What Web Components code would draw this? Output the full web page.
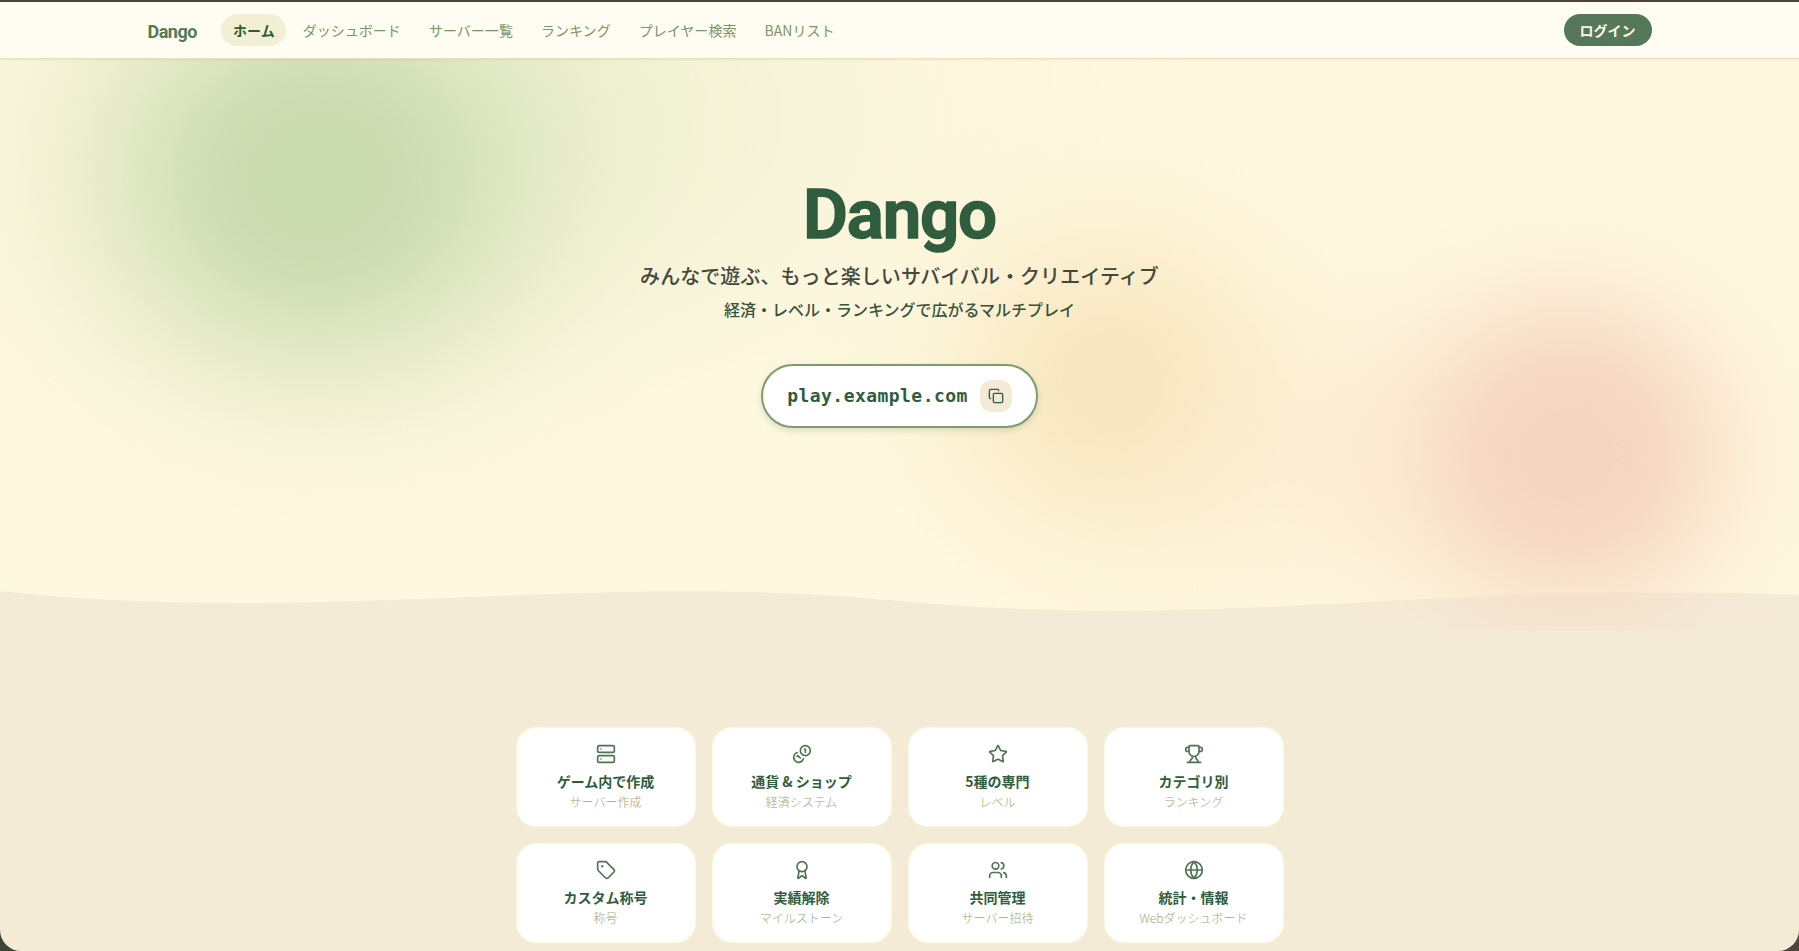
<!DOCTYPE html>
<html lang="ja">
<head>
<meta charset="utf-8">
<title>Dango</title>
<style>
  html {
    background: linear-gradient(90deg, #3b4636, #4c443d);
  }

  body {
    margin: 0;
    height: 951px;
    overflow: hidden;
    font-family: "Noto Sans CJK JP", sans-serif;
    -webkit-font-smoothing: antialiased;
  }
</style>
</head>
<body>
<dango-app>
  <dango-nav slot="nav">
    <dango-nav-item active>ホーム</dango-nav-item>
    <dango-nav-item>ダッシュボード</dango-nav-item>
    <dango-nav-item>サーバー一覧</dango-nav-item>
    <dango-nav-item>ランキング</dango-nav-item>
    <dango-nav-item>プレイヤー検索</dango-nav-item>
    <dango-nav-item>BANリスト</dango-nav-item>
    <dango-login slot="action">ログイン</dango-login>
  </dango-nav>
  <dango-hero>
    <span slot="title">Dango</span>
    <span slot="lead">みんなで遊ぶ、もっと楽しいサバイバル・クリエイティブ</span>
    <span slot="sub">経済・レベル・ランキングで広がるマルチプレイ</span>
    <dango-address>play.example.com</dango-address>
  </dango-hero>
  <dango-features>
    <dango-card icon="server" label="サーバー作成">ゲーム内で作成</dango-card>
    <dango-card icon="coins" label="経済システム">通貨 &amp; ショップ</dango-card>
    <dango-card icon="star" label="レベル">5種の専門</dango-card>
    <dango-card icon="trophy" label="ランキング">カテゴリ別</dango-card>
    <dango-card icon="tag" label="称号">カスタム称号</dango-card>
    <dango-card icon="award" label="マイルストーン">実績解除</dango-card>
    <dango-card icon="users" label="サーバー招待">共同管理</dango-card>
    <dango-card icon="globe" label="Webダッシュボード">統計・情報</dango-card>
  </dango-features>
</dango-app>

<script>
const ICONS = {
  server: '<rect width="20" height="8" x="2" y="2" rx="2"/><rect width="20" height="8" x="2" y="14" rx="2"/><path d="M6 6h.01M6 18h.01"/>',
  coins: '<path d="M13.744 17.736a6 6 0 1 1-7.48-7.48"/><path d="M15 6h1v4"/><path d="m6.134 14.768.866-.868 2.868 2.868"/><circle cx="16" cy="8" r="6"/>',
  star: '<path d="M11.525 2.295a.53.53 0 0 1 .95 0l2.31 4.679a2.123 2.123 0 0 0 1.595 1.16l5.166.756a.53.53 0 0 1 .294.904l-3.736 3.638a2.123 2.123 0 0 0-.611 1.878l.882 5.14a.53.53 0 0 1-.771.56l-4.618-2.428a2.122 2.122 0 0 0-1.973 0L6.396 21.01a.53.53 0 0 1-.77-.56l.881-5.139a2.122 2.122 0 0 0-.611-1.879L2.16 9.795a.53.53 0 0 1 .294-.906l5.165-.755a2.122 2.122 0 0 0 1.597-1.16z"/>',
  trophy: '<path d="M10 14.66v1.626a2 2 0 0 1-.976 1.696A5 5 0 0 0 7 21.978"/><path d="M14 14.66v1.626a2 2 0 0 0 .976 1.696A5 5 0 0 1 17 21.978"/><path d="M18 9h1.5a1 1 0 0 0 0-5H18"/><path d="M4 22h16"/><path d="M6 9a6 6 0 0 0 12 0V3a1 1 0 0 0-1-1H7a1 1 0 0 0-1 1z"/><path d="M6 9H4.5a1 1 0 0 1 0-5H6"/>',
  tag: '<path d="M12.586 2.586A2 2 0 0 0 11.172 2H4a2 2 0 0 0-2 2v7.172a2 2 0 0 0 .586 1.414l8.704 8.704a2.426 2.426 0 0 0 3.42 0l6.58-6.58a2.426 2.426 0 0 0 0-3.42z"/><circle cx="7.5" cy="7.5" r=".5" fill="currentColor"/>',
  award: '<path d="m15.477 12.89 1.515 8.526a.5.5 0 0 1-.81.47l-3.58-2.687a1 1 0 0 0-1.197 0l-3.586 2.686a.5.5 0 0 1-.81-.469l1.514-8.526"/><circle cx="12" cy="8" r="6"/>',
  users: '<path d="M16 21v-2a4 4 0 0 0-4-4H6a4 4 0 0 0-4 4v2"/><path d="M16 3.128a4 4 0 0 1 0 7.744"/><path d="M22 21v-2a4 4 0 0 0-3-3.87"/><circle cx="9" cy="7" r="4"/>',
  globe: '<circle cx="12" cy="12" r="10"/><path d="M12 2a14.5 14.5 0 0 0 0 20 14.5 14.5 0 0 0 0-20"/><path d="M2 12h20"/>',
  copy: '<rect width="14" height="14" x="8" y="8" rx="2"/><path d="M4 16c-1.1 0-2-.9-2-2V4c0-1.1.9-2 2-2h10c1.1 0 2 .9 2 2"/>',
};

function icon(name, size) {
  return `<svg width="${size}" height="${size}" viewBox="0 0 24 24" fill="none" stroke="currentColor" stroke-width="2" stroke-linecap="round" stroke-linejoin="round">${ICONS[name]}</svg>`;
}

// Radial gradient that falls off like a blurred disc.
function glow(id, color, strength, core) {
  let stops = '';
  for (let i = 0; i <= 20; i++) {
    const t = i / 20;
    const d = Math.max(0, (t - core) / (1 - core));
    const alpha = strength * Math.exp(-d * d * 4.3) * (1 - d ** 6);
    stops += `<stop offset="${t}" stop-color="${color}" stop-opacity="${alpha.toFixed(3)}"/>`;
  }
  return `<radialGradient id="${id}">${stops}</radialGradient>`;
}

// Registers an element whose shadow root is filled by render(element).
function define(name, render) {
  customElements.define(name, class extends HTMLElement {
    constructor() {
      super();
      this.attachShadow({ mode: 'open' });
    }

    connectedCallback() {
      this.shadowRoot.innerHTML = render(this);
    }
  });
}

define('dango-app', () => `
  <style>
    :host {
      display: flex;
      flex-direction: column;
      box-sizing: border-box;
      height: 951px;
      border-top: 2px solid #4c413b;
      border-radius: 0 0 21px 21px;
      overflow: hidden;
      background: #f4ebd7;
    }
  </style>
  <slot name="nav"></slot>
  <slot></slot>
`);

define('dango-nav', () => `
  <style>
    :host {
      display: block;
      position: relative;
      flex: none;
      box-sizing: border-box;
      height: 57px;
      background: #fffdf1;
      border-bottom: 1px solid #e6dfbf;
      box-shadow: 0 1px 2px rgba(160, 150, 100, .15);
      z-index: 1;
    }
    .inner {
      display: flex;
      align-items: center;
      box-sizing: border-box;
      max-width: 1536px;
      height: 56px;
      margin: 0 auto;
      padding: 0 16px;
    }
    .brand {
      width: 49px;
      margin-right: 24px;
      color: #56785a;
      font: 700 18px/28px Roboto, sans-serif;
      letter-spacing: -.5px;
      white-space: nowrap;
      padding-top: 3px;
    }
    nav {
      display: flex;
      gap: 4px;
      flex: 1;
    }
  </style>
  <div class="inner">
    <div class="brand">Dango</div>
    <nav><slot></slot></nav>
    <slot name="action"></slot>
  </div>
`);

define('dango-nav-item', () => `
  <style>
    :host {
      display: block;
      padding: 6px 11.5px 6px 12.5px;
      border-radius: 16px;
      color: #7b9569;
      font-size: 14px;
      font-weight: 400;
      line-height: 20px;
      letter-spacing: .03px;
      white-space: nowrap;
    }
    :host([active]) {
      background: #f1f0d4;
      color: #2f5b3b;
      font-weight: 700;
    }
  </style>
  <slot></slot>
`);

define('dango-login', () => `
  <style>
    :host {
      display: block;
      padding: 6px 16px;
      border-radius: 16px;
      background: #56785a;
      color: #fff8e1;
      font-size: 14px;
      font-weight: 700;
      line-height: 20px;
    }
  </style>
  <slot></slot>
`);

define('dango-hero', () => `
  <style>
    :host {
      display: block;
      position: relative;
      flex: none;
      height: 572px;
      overflow: hidden;
      background: #fff8e0;
      text-align: center;
    }
    .backdrop {
      position: absolute;
      inset: 0;
      width: 100%;
      height: 100%;
    }
    .content {
      position: relative;
      display: flex;
      flex-direction: column;
      align-items: center;
      padding-top: 120px;
    }
    h1 {
      margin: 0;
      padding-left: 0;
      color: #2f5d3d;
      font: 600 69px/72px Roboto, sans-serif;
      letter-spacing: -1.2px;
      -webkit-text-stroke: 1.6px #2f5d3d;
      stroke-linejoin: round;
    }
    p {
      margin: 0;
      font-weight: 500;
    }
    .lead {
      margin-top: 11px;
      color: #42493c;
      font-size: 20px;
      line-height: 28px;
      letter-spacing: .06px;
    }
    .sub {
      margin-top: 7px;
      color: #36543c;
      font-size: 16px;
      line-height: 24px;
    }
    .address {
      margin-top: 43px;
    }
  </style>
  <svg class="backdrop" viewBox="0 0 1799 572" preserveAspectRatio="none">
    <defs>
      ${glow('green', '#c6d8ab', .9, .1)}
      ${glow('mist', '#dfe9c4', .55, 0)}
      ${glow('amber', '#f6e4b8', .8, .08)}
      ${glow('pink', '#f5d3bf', .95, .14)}
      ${glow('halo', '#f9e3c8', .5, 0)}
    </defs>
    <ellipse cx="460" cy="60" rx="800" ry="460" fill="url(#mist)"/>
    <ellipse cx="315" cy="122" rx="400" ry="370" fill="url(#green)"/>
    <ellipse cx="1112" cy="323" rx="310" ry="300" fill="url(#amber)"/>
    <ellipse cx="1430" cy="400" rx="560" ry="300" fill="url(#halo)"/>
    <path d="M0 532C80 541 160 544 240 544C400 544 530 532.5 690 532.5C890 532.5 910 551.5 1115 551.5C1310 551.5 1430 533.5 1680 533.5Q1740 533.5 1799 536V572H0Z" fill="#f4ebd7"/>
    <ellipse cx="1571" cy="394" rx="280" ry="285" fill="url(#pink)"/>
  </svg>
  <div class="content">
    <h1><slot name="title"></slot></h1>
    <p class="lead"><slot name="lead"></slot></p>
    <p class="sub"><slot name="sub"></slot></p>
    <div class="address"><slot></slot></div>
  </div>
`);

define('dango-address', () => `
  <style>
    :host {
      display: flex;
      align-items: center;
      gap: 12px;
      box-sizing: border-box;
      height: 64px;
      padding: 0 24px;
      border: 2px solid #7f9c6f;
      border-radius: 32px;
      background: #fff;
      box-shadow: 0 3px 6px rgba(86, 120, 90, .2);
      color: #2f5d3d;
    }
    code {
      font: 700 18px/28px "DejaVu Sans Mono", monospace;
      letter-spacing: .45px;
    }
    button {
      display: flex;
      align-items: center;
      justify-content: center;
      width: 32px;
      height: 32px;
      padding: 0;
      border: 0;
      border-radius: 12px;
      background: #f4ebd7;
      color: #2f5d3d;
    }
  </style>
  <code><slot></slot></code>
  <button aria-label="コピー">${icon('copy', 16)}</button>
`);

define('dango-features', () => `
  <style>
    :host {
      display: grid;
      grid-template-columns: repeat(4, 180px);
      gap: 16px;
      justify-content: center;
      padding-top: 96px;
    }
  </style>
  <slot></slot>
`);

define('dango-card', (el) => `
  <style>
    :host {
      display: flex;
      flex-direction: column;
      align-items: center;
      box-sizing: border-box;
      height: 100px;
      padding-top: 16px;
      border: 1px solid #faf8e4;
      border-radius: 20px;
      background: #fff;
      box-shadow: 0 0 3px rgba(245, 243, 200, .9);
      white-space: nowrap;
    }
    svg {
      color: #4f7353;
    }
    .title {
      margin-top: 7px;
      color: #2f5d3d;
      font-size: 14px;
      font-weight: 700;
      line-height: 20px;
    }
    .label {
      margin-top: 3px;
      color: #9da778;
      font-size: 12px;
      font-weight: 300;
      line-height: 16px;
    }
  </style>
  ${icon(el.getAttribute('icon'), 20)}
  <div class="title"><slot></slot></div>
  <div class="label">${el.getAttribute('label')}</div>
`);
</script>
</body>
</html>
